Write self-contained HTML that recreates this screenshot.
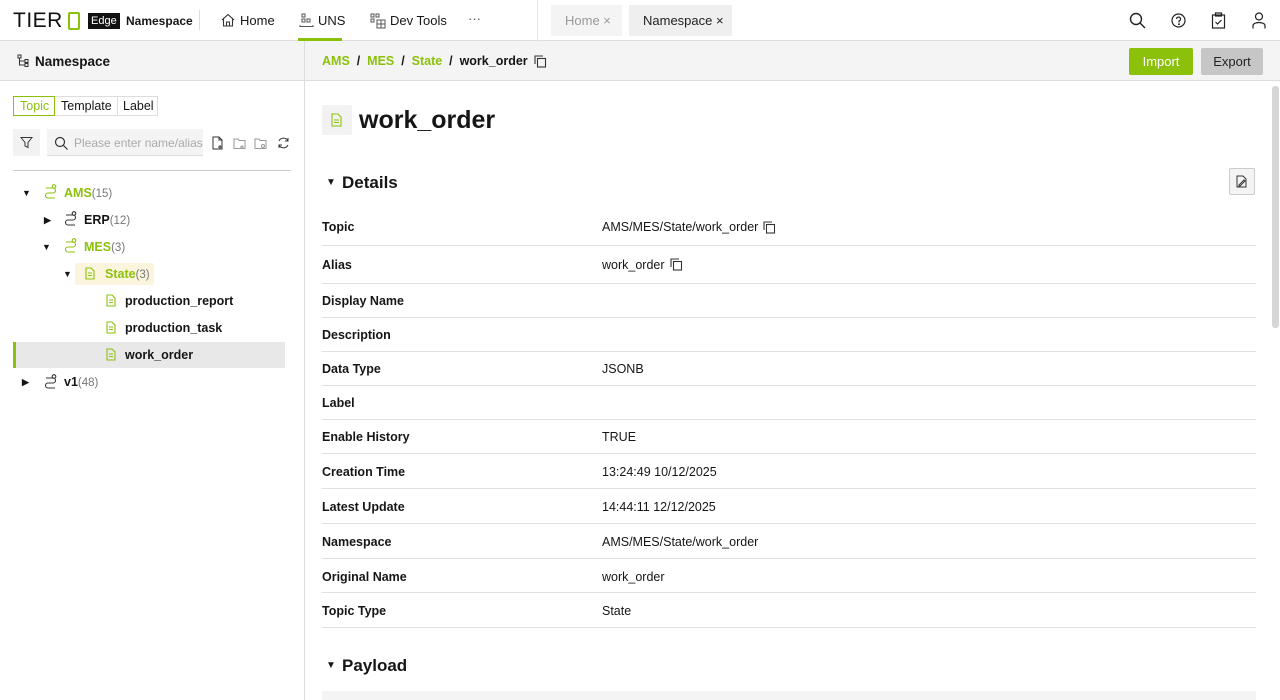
<!DOCTYPE html>
<html><head><meta charset="utf-8"><style>
*{box-sizing:border-box;margin:0;padding:0}
body{width:1280px;height:700px;overflow:hidden;background:#fff;font-family:"Liberation Sans",sans-serif;color:#161616;position:relative;font-size:13px}
.abs{position:absolute}
.top{position:absolute;left:0;top:0;width:1280px;height:41px;border-bottom:1px solid #ddd;background:#fff}
.sub{position:absolute;top:41px;height:40px;background:#f4f4f4;border-bottom:1px solid #ddd}
.g{color:#8cc10b}
.row{position:absolute;left:322px;width:934px;border-bottom:1px solid #e0e0e0;font-size:12.5px}
.row b{position:absolute;left:0;top:2px;font-weight:bold}
.row span{position:absolute;left:280px;top:2px}
.tree div{position:absolute;font-size:12.5px;font-weight:bold;white-space:nowrap}
.cnt{color:#777;font-weight:normal;font-size:11.5px}
svg{display:block}
</style></head><body>
<div class="top">
 <div class="abs" style="left:13px;top:9px;font-size:21px;letter-spacing:0.5px;color:#111">TIER</div>
 <div class="abs" style="left:68px;top:12px;width:12px;height:18px;border:2.5px solid #8cc10b;border-radius:2px"></div>
 <div class="abs" style="left:88px;top:13px;background:#111;color:#fff;font-size:11px;padding:1px 3px;line-height:14px">Edge</div>
 <div class="abs" style="left:126px;top:14px;font-weight:bold;font-size:12px">Namespace</div>
 <div class="abs" style="left:199px;top:10px;width:1px;height:20px;background:#ddd"></div>
 <svg class="abs" style="left:220px;top:12px" width="16" height="16" viewBox="0 0 16 16" fill="none" stroke="#333" stroke-width="1.1"><path d="M2 8L8 2.5 14 8M3.5 7v7h9V7M6.5 14v-4h3v4"/></svg>
 <div class="abs" style="left:240px;top:13px;font-size:13px">Home</div>
 <svg class="abs" style="left:299px;top:13px" width="15" height="15" viewBox="0 0 15 15" fill="none" stroke="#555" stroke-width="1"><rect x="3" y="1" width="3" height="3"/><rect x="3" y="6" width="3" height="3"/><rect x="8" y="6" width="3" height="3"/><path d="M1 12v1.5h13V12"/></svg>
 <div class="abs" style="left:318px;top:13px;font-size:13px">UNS</div>
 <div class="abs" style="left:298px;top:38px;width:44px;height:3px;background:#8cc10b"></div>
 <svg class="abs" style="left:370px;top:13px" width="16" height="16" viewBox="0 0 16 16" fill="none" stroke="#555" stroke-width="1"><rect x="1" y="1" width="3" height="3"/><rect x="6" y="1" width="3" height="3"/><rect x="1" y="6" width="3" height="3"/><rect x="7" y="7" width="8" height="8"/><path d="M7 11h8M11 7v8"/></svg>
 <div class="abs" style="left:390px;top:13px;font-size:13px">Dev Tools</div>
 <div class="abs" style="left:468px;top:11px;font-size:13px;color:#555">···</div>
 <div class="abs" style="left:537px;top:0;width:1px;height:41px;background:#e6e6e6"></div>
 <div class="abs" style="left:551px;top:5px;width:71px;height:31px;background:#f4f4f4;color:#999;font-size:13px;padding:8px 0 0 14px">Home ×</div>
 <div class="abs" style="left:629px;top:5px;width:103px;height:31px;background:#efefef;color:#222;font-size:13px;padding:8px 0 0 14px">Namespace ×</div>
 <svg class="abs" style="left:1129px;top:12px" width="17" height="17" viewBox="0 0 17 17" fill="none" stroke="#222" stroke-width="1.4"><circle cx="7" cy="7" r="5.5"/><path d="M11 11l5 5"/></svg>
 <svg class="abs" style="left:1171px;top:13px" width="15" height="15" viewBox="0 0 15 15" fill="none" stroke="#222" stroke-width="1.2"><circle cx="7.5" cy="7.5" r="6.5"/><path d="M5.5 6a2 2 0 1 1 2.5 2v1.5"/><circle cx="8" cy="11.3" r=".4"/></svg>
 <svg class="abs" style="left:1211px;top:12px" width="15" height="17" viewBox="0 0 15 17" fill="none" stroke="#222" stroke-width="1.2"><rect x="1.5" y="3" width="12" height="13"/><rect x="4.5" y="1" width="6" height="3"/><path d="M4.5 10l2 2 4-4"/></svg>
 <svg class="abs" style="left:1252px;top:12px" width="14" height="17" viewBox="0 0 14 17" fill="none" stroke="#222" stroke-width="1.2"><circle cx="7" cy="4.5" r="3.5"/><path d="M1 16.5v-3a6 3 0 0 1 12 0v3"/></svg>
</div>
<!-- left -->
<div class="sub" style="left:0;width:304px">
 <svg class="abs" style="left:17px;top:13px" width="14" height="14" viewBox="0 0 14 14" fill="none" stroke="#333" stroke-width="1"><rect x="1" y="1" width="3" height="3"/><path d="M2.5 4v7h5M2.5 7h5"/><rect x="8" y="5.5" width="3" height="3"/><rect x="8" y="9.5" width="3" height="3"/></svg>
 <div class="abs" style="left:35px;top:13px;font-weight:bold;font-size:13.5px">Namespace</div>
</div>
<div class="abs" style="left:304px;top:41px;width:1px;height:659px;background:#ddd"></div>
<div class="abs" style="left:13px;top:96px;height:20px;width:145px;border:1px solid #ddd;font-size:12.5px">
 <div class="abs" style="left:-1px;top:-1px;width:42px;height:20px;border:1px solid #8cc10b;color:#8cc10b;padding:2px 0 0 6px">Topic</div>
 <div class="abs" style="left:47px;top:2px">Template</div>
 <div class="abs" style="left:103px;top:-1px;width:1px;height:20px;background:#ddd"></div>
 <div class="abs" style="left:109px;top:2px">Label</div>
</div>
<div class="abs" style="left:13px;top:129px;width:27px;height:27px;background:#f2f2f2"></div>
<svg class="abs" style="left:20px;top:136px" width="13" height="13" viewBox="0 0 13 13" fill="none" stroke="#333" stroke-width="1"><path d="M1 1.5h11L8 6.5v5l-3-1.5v-3.5z"/></svg>
<div class="abs" style="left:47px;top:129px;width:156px;height:27px;background:#f4f4f4;border-bottom:1px solid #ddd"></div>
<svg class="abs" style="left:54px;top:136px" width="14" height="14" viewBox="0 0 14 14" fill="none" stroke="#333" stroke-width="1.2"><circle cx="6" cy="6" r="4.5"/><path d="M9.5 9.5l4 4"/></svg>
<div class="abs" style="left:74px;top:136px;color:#aaa;font-size:12px">Please enter name/alias</div>
<svg class="abs" style="left:212px;top:136px" width="80" height="14" viewBox="0 0 80 14" fill="none" stroke-width="1"><path stroke="#333" d="M1 1h6l3 3v9H1zM7 1v3h3M8 9v4M6 11h4"/><path stroke="#999" d="M22 3h4l1 1.5h6v8H22zM30 9v4M28 11h4"/><path stroke="#999" d="M43 3h4l1 1.5h6v8H43z"/><circle stroke="#999" cx="51" cy="10" r="1.5"/><path stroke="#333" d="M67 5a5 5 0 0 1 9 0M76 9a5 5 0 0 1-9 0M76 2v3h-3M67 12v-3h3"/></svg>
<div class="abs" style="left:13px;top:170px;width:278px;height:1px;background:#ccc"></div>
<div class="tree">
 <div style="left:22px;top:188px;font-size:9px">▼</div>
 <div style="left:64px;top:186px" class="g">AMS<span class="cnt">(15)</span></div>
 <div style="left:44px;top:215px;font-size:9px">▶</div>
 <div style="left:84px;top:213px">ERP<span class="cnt">(12)</span></div>
 <div style="left:42px;top:242px;font-size:9px">▼</div>
 <div style="left:84px;top:240px" class="g">MES<span class="cnt">(3)</span></div>
 <div style="left:75px;top:263px;width:79px;height:22px;background:#fbf5dd;border-radius:2px"></div>
 <div style="left:63px;top:269px;font-size:9px">▼</div>
 <div style="left:105px;top:267px" class="g">State<span class="cnt">(3)</span></div>
 <div style="left:125px;top:294px">production_report</div>
 <div style="left:125px;top:321px">production_task</div>
 <div style="left:13px;top:342px;width:272px;height:26px;background:#e8e8e8;border-left:3px solid #8cc10b"></div>
 <div style="left:125px;top:348px">work_order</div>
 <div style="left:22px;top:377px;font-size:9px">▶</div>
 <div style="left:64px;top:375px">v1<span class="cnt">(48)</span></div>
</div>
<svg class="abs" style="left:0;top:0" width="300" height="400" fill="none" stroke-width="1.1">
 <g stroke="#8cc10b"><path d="M46 188h7a2.5 2.5 0 0 1 0 5h-5a2.5 2.5 0 0 0 0 5h7"/><circle cx="54" cy="186.5" r="1.8"/></g>
 <g stroke="#333"><path d="M66 215h7a2.5 2.5 0 0 1 0 5h-5a2.5 2.5 0 0 0 0 5h7"/><circle cx="74" cy="213.5" r="1.8"/></g>
 <g stroke="#8cc10b"><path d="M66 242h7a2.5 2.5 0 0 1 0 5h-5a2.5 2.5 0 0 0 0 5h7"/><circle cx="74" cy="240.5" r="1.8"/></g>
 <g stroke="#333"><path d="M46 378h7a2.5 2.5 0 0 1 0 5h-5a2.5 2.5 0 0 0 0 5h7"/><circle cx="54" cy="376.5" r="1.8"/></g>
 <g stroke="#8cc10b"><path d="M86 268h5l3 3v8h-8zM88 273h4M88 275.5h4"/><path d="M107 295h5l3 3v8h-8zM109 300h4M109 302.5h4"/><path d="M107 322h5l3 3v8h-8zM109 327h4M109 329.5h4"/><path d="M107 349h5l3 3v8h-8zM109 354h4M109 356.5h4"/></g>
</svg>
<!-- right -->
<div class="sub" style="left:305px;width:975px">
 <div class="abs" style="left:17px;top:13px;font-weight:bold;font-size:12.5px"><span class="g">AMS</span> &nbsp;/&nbsp; <span class="g">MES</span> &nbsp;/&nbsp; <span class="g">State</span> &nbsp;/&nbsp; work_order</div>
 <svg class="abs" style="left:229px;top:14px" width="13" height="13" viewBox="0 0 13 13" fill="none" stroke="#333" stroke-width="1.1"><path d="M1 9V1h8"/><rect x="3.5" y="3.5" width="8" height="8.5"/></svg>
 <div class="abs" style="left:824px;top:7px;width:64px;height:27px;background:#8cc10b;color:#fff;font-size:13px;text-align:center;line-height:27px;border-radius:2px">Import</div>
 <div class="abs" style="left:896px;top:7px;width:62px;height:27px;background:#c6c6c6;color:#222;font-size:13px;text-align:center;line-height:27px;border-radius:2px">Export</div>
</div>
<div class="abs" style="left:1272px;top:86px;width:7px;height:242px;background:#d6d6d6;border-radius:3px"></div>
<div class="abs" style="left:322px;top:105px;width:30px;height:30px;background:#f2f2f2;border-radius:2px"></div>
<svg class="abs" style="left:331px;top:113px" width="12" height="14" viewBox="0 0 12 14" fill="none" stroke="#8cc10b" stroke-width="1.1"><path d="M1 1h6l3 3v9H1zM3 7h5M3 9.5h5"/></svg>
<div class="abs" style="left:359px;top:106px;font-size:25px;font-weight:bold">work_order</div>
<div class="abs" style="left:326px;top:177px;font-size:10px">▼</div>
<div class="abs" style="left:342px;top:173px;font-size:17px;font-weight:bold">Details</div>
<div class="abs" style="left:1229px;top:168px;width:26px;height:27px;background:#f4f4f4;border:1px solid #ccc;border-radius:2px"></div>
<svg class="abs" style="left:1236px;top:175px" width="12" height="13" viewBox="0 0 12 13" fill="none" stroke="#333" stroke-width="1"><path d="M1 1h6l3 3v8H1zM3 10l5-5 1 1-5 5H3z"/></svg>
<div class="row" style="top:218px;height:28px"><b>Topic</b><span>AMS/MES/State/work_order</span></div>
<svg class="abs" style="left:763px;top:221px" width="13" height="13" viewBox="0 0 13 13" fill="none" stroke="#333" stroke-width="1.1"><path d="M1 9V1h8"/><rect x="3.5" y="3.5" width="8" height="8.5"/></svg>
<div class="row" style="top:256px;height:28px"><b>Alias</b><span>work_order</span></div>
<svg class="abs" style="left:670px;top:258px" width="13" height="13" viewBox="0 0 13 13" fill="none" stroke="#333" stroke-width="1.1"><path d="M1 9V1h8"/><rect x="3.5" y="3.5" width="8" height="8.5"/></svg>
<div class="row" style="top:292px;height:26px"><b>Display Name</b></div>
<div class="row" style="top:326px;height:26px"><b>Description</b></div>
<div class="row" style="top:360px;height:26px"><b>Data Type</b><span>JSONB</span></div>
<div class="row" style="top:394px;height:26px"><b>Label</b></div>
<div class="row" style="top:428px;height:26px"><b>Enable History</b><span>TRUE</span></div>
<div class="row" style="top:463px;height:26px"><b>Creation Time</b><span>13:24:49 10/12/2025</span></div>
<div class="row" style="top:498px;height:26px"><b>Latest Update</b><span>14:44:11 12/12/2025</span></div>
<div class="row" style="top:533px;height:26px"><b>Namespace</b><span>AMS/MES/State/work_order</span></div>
<div class="row" style="top:568px;height:25px"><b>Original Name</b><span>work_order</span></div>
<div class="row" style="top:602px;height:26px"><b>Topic Type</b><span>State</span></div>
<div class="abs" style="left:326px;top:660px;font-size:10px">▼</div>
<div class="abs" style="left:342px;top:656px;font-size:17px;font-weight:bold">Payload</div>
<div class="abs" style="left:322px;top:691px;width:934px;height:9px;background:#f4f4f4"></div>
</body></html>
